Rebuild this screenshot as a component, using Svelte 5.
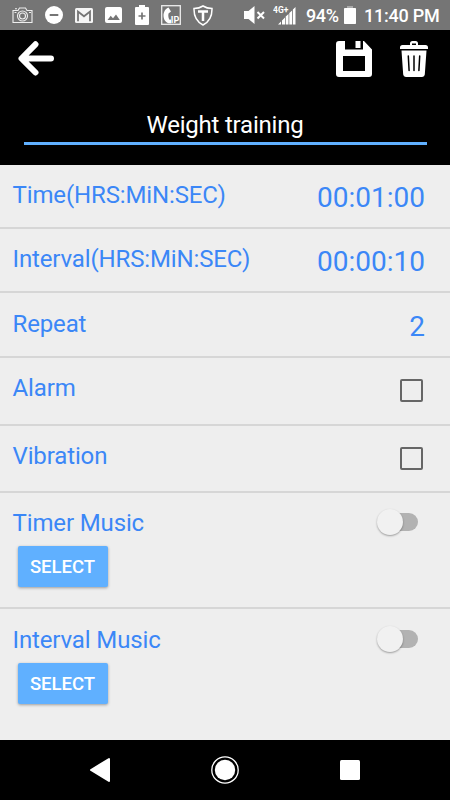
<script>
  let title = 'Weight training'

  const times = [
    { label: 'Time(HRS:MiN:SEC)', value: '00:01:00', size: 'first' },
    { label: 'Interval(HRS:MiN:SEC)', value: '00:00:10', size: 'second' },
    { label: 'Repeat', value: '2', size: 'third' },
  ]

  let checks = [
    { label: 'Alarm', checked: false },
    { label: 'Vibration', checked: false },
  ]

  let music = [
    { label: 'Timer Music', on: false },
    { label: 'Interval Music', on: false },
  ]
</script>

<div class="screen">
  <div class="status">
    <div class="notifications">
      <svg width="21" height="17" viewBox="0 0 21 17" fill="none" stroke="#eee" stroke-width="1.1">
        <path d="M1 3.5h5l1.5-2.5h6L15 3.5h5v12H1z" />
        <circle cx="10.5" cy="9" r="5" />
        <circle cx="10.5" cy="9" r="3" />
        <path d="M2.5 5.5h2M17 5.5h2M3 1.8h2" />
      </svg>
      <svg width="18" height="18" viewBox="0 0 18 18">
        <circle cx="9" cy="9" r="9" fill="#fff" />
        <path d="M4.7 9h8.6" stroke="#757575" stroke-width="2" />
      </svg>
      <svg width="18" height="15" viewBox="0 0 18 15">
        <rect width="18" height="15" rx="1.5" fill="#f5f5f5" />
        <path d="M3 13.200V3.600L9 8.300l6-4.700v9.600" fill="none" stroke="#757575" stroke-width="1.800" />
      </svg>
      <svg width="17" height="16" viewBox="0 0 17 16">
        <rect width="17" height="16" rx="2" fill="#fff" />
        <path d="M2.5 13l3.2-4.2L8 11.3l3-3.8 3.8 5.5z" fill="#757575" />
      </svg>
      <svg width="14" height="20" viewBox="0 0 14 20">
        <path d="M4 0h6v2h3a1 1 0 0 1 1 1v16a1 1 0 0 1-1 1H1a1 1 0 0 1-1-1V3a1 1 0 0 1 1-1h3z" fill="#fff" />
        <path d="M7 7.5v7M3.5 11h7" stroke="#757575" stroke-width="1.7" />
      </svg>
      <svg width="20" height="20" viewBox="0 0 20 20">
        <rect x=".7" y=".7" width="18.6" height="18.6" fill="none" stroke="#eee" stroke-width="1.3" />
        <path d="M7.500 2.400l2.500 4.100-2.500 1.900c-.5 2.600 0 4.600 1 6.300l1.500-.2v3.700c-4.300.7-7.500-2.800-7.500-7.700 0-3.600 2-7 5-8.100z" fill="#fff" />
        <text x="9.8" y="17.500" class="ip">IP</text>
      </svg>
      <svg width="20" height="21" viewBox="0 0 20 21" fill="none" stroke="#fff">
        <path d="M10 1c2.700 1.700 5.500 2.400 9 2.500.2 7.500-2 13-9 16.500C3 16.500.8 11 1 3.500 4.500 3.400 7.300 2.700 10 1z" stroke-width="1.500" />
        <path d="M5 6.500h10M10 6.500v9.500" stroke-width="2.500" />
      </svg>
    </div>
    <div class="system">
      <svg width="22" height="18" viewBox="0 0 22 18">
        <path d="M0 5h4.500L10.500 0v18l-6-5H0z" fill="#fff" />
        <path d="M13.500 6l6.500 6.500M20 6l-6.500 6.500" stroke="#fff" stroke-width="2" />
      </svg>
      <svg class="signal" width="23" height="20" viewBox="0 0 23 20">
        <text x="0" y="7.500" class="network">4G+</text>
        <path d="M5 19.500l3-3v3zM9 15.500l3-3v7H9zM12.700 11.500l2.800-2.500v10.500h-2.800zM16.300 8l2.800-2.500v14h-2.800zM19.900 4.500l2.600-2.500v17.500h-2.600z" fill="#fff" />
      </svg>
      <span class="percent">94%</span>
      <svg class="battery" width="12" height="18" viewBox="0 0 12 18">
        <path d="M3 0h6v2H3z" fill="#aaa" />
        <rect y="2" width="12" height="16" rx=".7" fill="#fff" />
      </svg>
      <span class="clock">11:40 PM</span>
    </div>
  </div>

  <header>
    <div class="toolbar">
      <button class="icon" aria-label="Back">
        <svg width="36" height="36" viewBox="0 0 36 36" fill="none" stroke="#fff" stroke-width="6" stroke-linecap="round" stroke-linejoin="round">
          <path d="M17.500 3.300L3.500 17.500l14 14M4.500 17.500h28.500" />
        </svg>
      </button>
      <button class="icon save" aria-label="Save">
        <svg width="36" height="36" viewBox="0 0 36 36">
          <path fill="#fff" fill-rule="evenodd" d="M3 0h6v8.500h18V0h1l8 8.500V33a3 3 0 0 1-3 3H3a3 3 0 0 1-3-3V3a3 3 0 0 1 3-3zM7 15v15h22V15z" />
          <path fill="#fff" d="M19.500 0h5v7h-5z" />
        </svg>
      </button>
      <button class="icon" aria-label="Delete">
        <svg width="28" height="36" viewBox="0 0 28 36">
          <path fill="#fff" fill-rule="evenodd" d="M10 4V2.500A2.500 2.500 0 0 1 12.500 0h3A2.500 2.500 0 0 1 18 2.500V4h7.500A2.500 2.500 0 0 1 28 6.500V8H0V6.500A2.500 2.500 0 0 1 2.500 4zM12 4h4V2.500h-4z" />
          <path fill="#fff" d="M1.500 9.500h25l-1.700 24a2.700 2.700 0 0 1-2.700 2.500H5.900a2.700 2.700 0 0 1-2.700-2.500z" />
          <path d="M8.300 15l.8 14.500M14 15v14.500M19.700 15l-.8 14.500" stroke="#000" stroke-width="1.500" stroke-linecap="round" />
        </svg>
      </button>
    </div>
    <input class="title" aria-label="Title" bind:value={title} />
  </header>

  <main>
    {#each times as item}
      <div class="row {item.size}">
        <span class="label">{item.label}</span>
        <span class="value">{item.value}</span>
      </div>
    {/each}

    {#each checks as item}
      <label class="row check">
        <span class="label">{item.label}</span>
        <input type="checkbox" bind:checked={item.checked} />
      </label>
    {/each}

    {#each music as item}
      <div class="row music">
        <div>
          <div class="label">{item.label}</div>
          <button class="select">SELECT</button>
        </div>
        <button
          class="switch"
          class:on={item.on}
          aria-label={item.label}
          on:click={() => (item.on = !item.on)}
        >
          <span class="thumb"></span>
        </button>
      </div>
    {/each}
  </main>

  <nav>
    <svg width="22" height="26" viewBox="0 0 22 26">
      <path d="M20 2v22L2 13z" fill="#fff" stroke="#fff" stroke-width="2" stroke-linejoin="round" />
    </svg>
    <svg width="28" height="28" viewBox="0 0 28 28">
      <circle cx="14" cy="14" r="13.200" fill="none" stroke="#fff" stroke-width="1.300" />
      <circle cx="14" cy="14" r="10.200" fill="#fff" />
    </svg>
    <svg width="22" height="20" viewBox="0 0 22 20">
      <rect x="1" width="20" height="20" rx="1.500" fill="#fff" />
    </svg>
  </nav>
</div>

<style>
  :global(body) {
    margin: 0;
  }

  .screen {
    display: flex;
    flex-direction: column;
    width: 450px;
    height: 800px;
    overflow: hidden;
    background: #eee;
    font-family: Roboto, sans-serif;
  }

  svg {
    display: block;
    flex: none;
  }

  button {
    padding: 0;
    border: 0;
    background: none;
    font-family: inherit;
  }

  .status {
    display: flex;
    justify-content: space-between;
    height: 30px;
    padding: 0 11px 0 12px;
    background: #757575;
    color: #fff;
  }

  .notifications {
    display: flex;
    align-items: center;
    justify-content: space-between;
    width: 201px;
  }

  .system {
    display: flex;
    align-items: center;
    font-size: 18px;
    font-weight: 500;
    line-height: 30px;
    white-space: nowrap;
  }

  .signal {
    margin: 0 10px 0 7px;
  }

  .percent {
    width: 32px;
    letter-spacing: -0.4px;
    padding-top: 2px;
  }

  .battery {
    margin: 0 8px 0 6px;
  }

  .clock {
    width: 75px;
    padding-top: 2px;
    letter-spacing: -0.25px;
  }

  .ip {
    fill: #fff;
    font-size: 9px;
    font-weight: 700;
  }

  .network {
    fill: #fff;
    font-size: 8.5px;
    font-weight: 700;
  }

  header {
    height: 135px;
    box-sizing: border-box;
    padding: 11px 22px 0 18px;
    background: #000;
  }

  .toolbar {
    display: flex;
    height: 36px;
  }

  .save {
    margin: 0 28px 0 auto;
  }

  .title {
    display: block;
    box-sizing: border-box;
    width: 403px;
    height: 38px;
    margin: 30px 0 0 5.5px;
    padding: 1px 0 0;
    border: 0;
    border-bottom: 3px solid #60b0ff;
    border-radius: 0;
    outline: 0;
    background: none;
    color: #fff;
    font: 24px/34px Roboto, sans-serif;
    letter-spacing: -0.22px;
    text-align: center;
  }

  main {
    height: 575px;
  }

  .row {
    display: flex;
    justify-content: space-between;
    box-sizing: border-box;
    padding: 16px 25px 0 12.5px;
    border-bottom: 2px solid #d6d6d6;
    color: #3b87f7;
  }

  .first,
  .second {
    height: 64px;
  }

  .third {
    height: 65px;
    padding-top: 17px;
  }

  .label {
    font-size: 24px;
    line-height: 28px;
    letter-spacing: -0.13px;
  }

  .value {
    padding-top: 1px;
    font-size: 28px;
    line-height: 32px;
  }

  .check {
    height: 67.5px;
    padding-right: 27px;
  }

  .check input {
    appearance: none;
    width: 23px;
    height: 23px;
    margin: 5px 0 0;
    border: 2px solid #666;
    border-radius: 2px;
  }

  .check input:checked {
    background: #60b0ff;
  }

  .music {
    height: 116px;
    padding-right: 32px;
  }

  .music:last-child {
    padding-top: 17px;
    border: 0;
  }

  .select {
    width: 90px;
    height: 41px;
    margin: 9px 0 0 5px;
    border-radius: 2px;
    background: #60b0ff;
    box-shadow: 0 1px 3px rgba(0, 0, 0, 0.35);
    color: #fff;
    font-size: 18.5px;
    font-weight: 500;
  }

  .switch {
    display: flex;
    align-items: center;
    width: 34px;
    height: 18px;
    margin-top: 4px;
    border-radius: 9px;
    background: #b2b2b2;
  }

  .thumb {
    flex: none;
    width: 26px;
    height: 26px;
    margin-left: -7px;
    border-radius: 50%;
    background: #f1f1f1;
    box-shadow: 0 1px 2px rgba(0, 0, 0, 0.35);
  }

  .switch.on {
    justify-content: flex-end;
  }

  nav {
    display: flex;
    align-items: center;
    justify-content: space-between;
    height: 60px;
    padding: 0 89px;
    background: #000;
  }
</style>
